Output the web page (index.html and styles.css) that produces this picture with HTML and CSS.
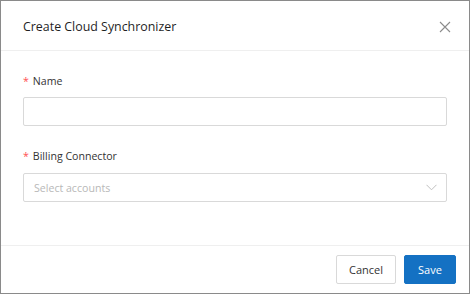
FILE: index.html
```html
<!DOCTYPE html>
<html lang="en">

<head>
    <meta charset="UTF-8">
    <meta name="viewport" content="width=device-width, initial-scale=1.0">
    <title> Create Cloud Synchronizer </title>

    <link rel="stylesheet" href="styles.css">
</head>

<body>
    <div class="modal">
        <div class="modal_header">
            <h2 class="modal_title">Create Cloud Synchronizer</h2>
            <a href="#" class="modal_close">
                <svg width="12" height="12" viewBox="0 0 12 12">
                    <path d="M1 1 L11 11 M11 1 L1 11" stroke="#8c8c8c" stroke-width="1.1" fill="none" />
                </svg>
            </a>
        </div>
        <div class="modal_body">
            <div class="form_item">
                <label class="form_label"><span class="req">*</span>Name</label>
                <input type="text" class="form_input">
            </div>
            <div class="form_item">
                <label class="form_label"><span class="req">*</span>Billing Connector</label>
                <div class="form_select">
                    <span class="placeholder">Select accounts</span>
                    <svg width="11" height="7" viewBox="0 0 11 7">
                        <path d="M0.5 0.8 L5.5 5.8 L10.5 0.8" stroke="#bfbfbf" stroke-width="1" fill="none" />
                    </svg>
                </div>
            </div>
        </div>
        <div class="modal_footer">
            <button class="btn btn_default">Cancel</button>
            <button class="btn btn_primary">Save</button>
        </div>
    </div>
</body>

</html>
```

FILE: styles.css
```css
* {
    margin: 0;
    padding: 0;
    box-sizing: border-box;
}

body {
    font-family: "Open Sans", "Noto Sans", sans-serif;
    color: #333;
    background: #fff;
}

.modal {
    width: 470px;
    height: 294px;
    border: 1px solid #8a8a8a;
    display: flex;
    flex-direction: column;
}

.modal_header {
    height: 50px;
    border-bottom: 1px solid #efefef;
    padding: 0 18px 0 22px;
    display: flex;
    align-items: center;
    justify-content: space-between;
}

.modal_title {
    font-size: 12.4px;
    font-weight: 500;
    color: #1f1f1f;
    padding-top: 2px;
}

.modal_close {
    display: flex;
    margin-top: 2px;
}

.modal_body {
    flex: 1;
    padding: 21px 22px 0;
}

.form_item {
    margin-bottom: 21px;
}

.form_label {
    display: block;
    height: 18px;
    line-height: 18px;
    font-size: 10.6px;
    color: #333;
    margin-bottom: 7px;
}

.form_item + .form_item .form_label {
    margin-bottom: 8px;
}

.req {
    color: #ff4d4f;
    margin-right: 4px;
}

.form_input,
.form_select {
    display: block;
    width: 100%;
    height: 29px;
    border: 1px solid #d9d9d9;
    border-radius: 2px;
    background: #fff;
}

.form_select {
    display: flex;
    align-items: center;
    justify-content: space-between;
    padding: 0 9px 0 10px;
}

.placeholder {
    font-size: 10.6px;
    color: #b8b8b8;
}

.modal_footer {
    height: 48px;
    border-top: 1px solid #efefef;
    padding: 9px 13px 0 0;
    display: flex;
    justify-content: flex-end;
    gap: 8px;
}

.btn {
    height: 29px;
    border-radius: 2px;
    font-family: inherit;
    font-size: 11px;
    cursor: pointer;
}

.btn_default {
    width: 60px;
    border: 1px solid #d9d9d9;
    background: #fff;
    color: #333;
}

.btn_primary {
    width: 52px;
    border: 1px solid #1471c3;
    background: #1471c3;
    color: #fff;
}
```
